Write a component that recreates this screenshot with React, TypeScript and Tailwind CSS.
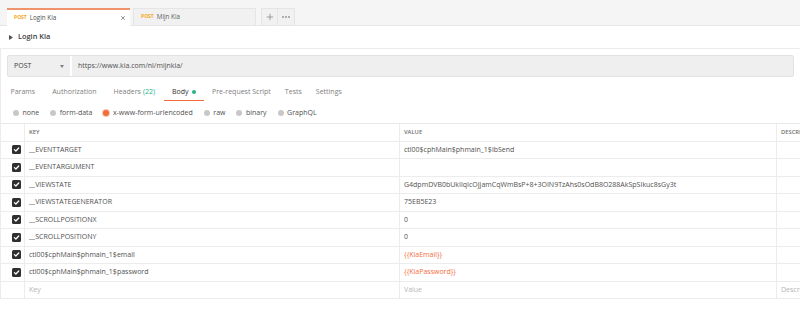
import React from 'react';

const rows = [
  { key: '__EVENTTARGET', value: 'ctl00$cphMain$phmain_1$lbSend' },
  { key: '__EVENTARGUMENT', value: '' },
  { key: '__VIEWSTATE', value: 'G4dpmDVB0bUkIlqIcOJjamCqWmBsP+8+3OIN9TzAhs0sOdB8O288AkSpSIkuc8sGy3t' },
  { key: '__VIEWSTATEGENERATOR', value: '75EB5E23' },
  { key: '__SCROLLPOSITIONX', value: '0' },
  { key: '__SCROLLPOSITIONY', value: '0' },
  { key: 'ctl00$cphMain$phmain_1$email', value: '{{KiaEmail}}', variable: true },
  { key: 'ctl00$cphMain$phmain_1$password', value: '{{KiaPassword}}', variable: true },
];

const bodyTypes = ['none', 'form-data', 'x-www-form-urlencoded', 'raw', 'binary', 'GraphQL'];

function Checkbox() {
  return (
    <div className="w-[9px] h-[9px] rounded-[1.5px] bg-[#2f2f2f] flex items-center justify-center">
      <svg width="7" height="7" viewBox="0 0 10 10" fill="none">
        <path d="M2 5.2 L4.1 7.2 L8.2 2.8" stroke="white" strokeWidth="1.8" strokeLinecap="round" strokeLinejoin="round" />
      </svg>
    </div>
  );
}

export default function App() {
  return (
    <div
      className="w-[800px] h-[317px] overflow-hidden bg-white text-[#505050]"
      style={{ fontFamily: '"Open Sans", "Liberation Sans", sans-serif' }}
    >
      {/* request tabs */}
      <div className="h-[26px] bg-[#f5f5f5] border-b border-[#e6e6e6] flex items-end pl-[7px]">
        <div className="w-[123px] h-[18px] -mb-px bg-white border-t-2 border-[#f0936c] flex items-center pl-[7px] pr-[4px]">
          <span className="text-[5px] font-bold text-[#f5a623] mr-[3px]">POST</span>
          <span className="text-[6.3px] text-[#505050]">Login Kia</span>
          <svg className="ml-auto" width="6" height="6" viewBox="0 0 10 10">
            <path d="M2 2 L8 8 M8 2 L2 8" stroke="#707070" strokeWidth="1.3" />
          </svg>
        </div>
        <div className="ml-[3px] w-[123px] h-[17px] bg-[#f1f1f1] border border-b-0 border-[#e5e5e5] flex items-center pl-[7px]">
          <span className="text-[5px] font-bold text-[#f5a623] mr-[3px]">POST</span>
          <span className="text-[6.3px] text-[#606060]">Mijn Kia</span>
        </div>
        <div className="ml-[5px] flex h-[17px] bg-[#f1f1f1] border border-b-0 border-[#e5e5e5]">
          <div className="w-[16px] flex items-center justify-center border-r border-[#e5e5e5]">
            <svg width="8" height="8" viewBox="0 0 10 10">
              <path d="M5 1 V9 M1 5 H9" stroke="#8a8a8a" strokeWidth="1" />
            </svg>
          </div>
          <div className="w-[16px] flex items-center justify-center gap-[1px]">
            <span className="w-[2px] h-[2px] rounded-full bg-[#9a9a9a]" />
            <span className="w-[2px] h-[2px] rounded-full bg-[#9a9a9a]" />
            <span className="w-[2px] h-[2px] rounded-full bg-[#9a9a9a]" />
          </div>
        </div>
      </div>

      {/* request name */}
      <div className="h-[23px] border-b border-[#ececec] flex items-center pl-[9px]">
        <svg width="4" height="5" viewBox="0 0 4 5">
          <path d="M0 0 L4 2.5 L0 5 Z" fill="#505050" />
        </svg>
        <span className="ml-[5px] text-[7.4px] font-semibold text-[#404040]">Login Kia</span>
      </div>

      <div className="border-l border-[#ececec]">
        {/* url bar */}
        <div className="pt-[6px] px-[6px]">
          <div className="h-[22px] bg-[#efefef] border border-[#e2e2e2] rounded-[2px] flex">
            <div className="w-[64px] flex items-center justify-between pl-[6px] pr-[6px] border-r-2 border-white">
              <span className="text-[7px] text-[#404040]">POST</span>
              <svg width="4" height="3" viewBox="0 0 4 3">
                <path d="M0 0 H4 L2 3 Z" fill="#808080" />
              </svg>
            </div>
            <div className="flex items-center pl-[6px] text-[7px] text-[#505050]">https://www.kia.com/nl/mijnkia/</div>
          </div>
        </div>

        {/* request sections */}
        <div className="mt-[7px] h-[17px] flex pl-[1px] text-[7px]">
          <div className="px-[8.5px] flex items-center text-[#808080]">Params</div>
          <div className="px-[8.5px] flex items-center text-[#808080]">Authorization</div>
          <div className="px-[8.5px] flex items-center text-[#808080]">
            Headers <span className="ml-[2px] text-[#26b47f]">(22)</span>
          </div>
          <div className="px-[8.5px] flex items-center text-[#303030] border-b-[1.5px] border-[#f26b3a]">
            Body
            <span className="ml-[3px] w-[4px] h-[4px] rounded-full bg-[#26b47f]" />
          </div>
          <div className="pl-[8px] pr-[7px] flex items-center text-[#808080]">Pre-request Script</div>
          <div className="px-[7px] flex items-center text-[#808080]">Tests</div>
          <div className="px-[7px] flex items-center text-[#808080]">Settings</div>
        </div>

        {/* body types */}
        <div className="mt-[2px] h-[21px] flex items-center pl-[12px] gap-[11px] border-b border-[#e8e8e8] text-[7px]">
          {bodyTypes.map((t) => (
            <div key={t} className="flex items-center gap-[3.5px]">
              {t === 'x-www-form-urlencoded' ? (
                <span className="w-[6px] h-[6px] rounded-full bg-[#f26b3a] ring-1 ring-[#f9c9b5]" />
              ) : (
                <span className="w-[6px] h-[6px] rounded-full bg-[#c8c8c8]" />
              )}
              <span className="text-[#505050]">{t}</span>
            </div>
          ))}
        </div>

        {/* key/value table */}
        <div className="text-[7px]">
          <div className="grid grid-cols-[24px_375px_377px_1fr] h-[17.5px] border-b border-[#ececec]">
            <div className="border-r border-[#ececec]" />
            <div className="border-r border-[#ececec] flex items-center pl-[4px] text-[5.8px] font-semibold text-[#707070]">KEY</div>
            <div className="border-r border-[#ececec] flex items-center pl-[4px] text-[5.8px] font-semibold text-[#707070]">VALUE</div>
            <div className="flex items-center pl-[4px] text-[5.8px] font-semibold text-[#707070] whitespace-nowrap overflow-hidden">DESCRIPTION</div>
          </div>
          {rows.map((r) => (
            <div key={r.key} className="grid grid-cols-[24px_375px_377px_1fr] h-[17.5px] border-b border-[#ececec]">
              <div className="border-r border-[#ececec] flex items-center justify-end pr-[3px]">
                <Checkbox />
              </div>
              <div className="border-r border-[#ececec] flex items-center pl-[4px] text-[#505050]">{r.key}</div>
              <div className={`border-r border-[#ececec] flex items-center pl-[4px] ${r.variable ? 'text-[#f26b3a]' : 'text-[#505050]'}`}>
                {r.value}
              </div>
              <div />
            </div>
          ))}
          <div className="grid grid-cols-[24px_375px_377px_1fr] h-[17.5px] border-b border-[#ececec]">
            <div className="border-r border-[#ececec]" />
            <div className="border-r border-[#ececec] flex items-center pl-[4px] text-[#b5b5b5]">Key</div>
            <div className="border-r border-[#ececec] flex items-center pl-[4px] text-[#b5b5b5]">Value</div>
            <div className="flex items-center pl-[4px] text-[#b5b5b5] whitespace-nowrap overflow-hidden">Description</div>
          </div>
        </div>
      </div>
    </div>
  );
}
